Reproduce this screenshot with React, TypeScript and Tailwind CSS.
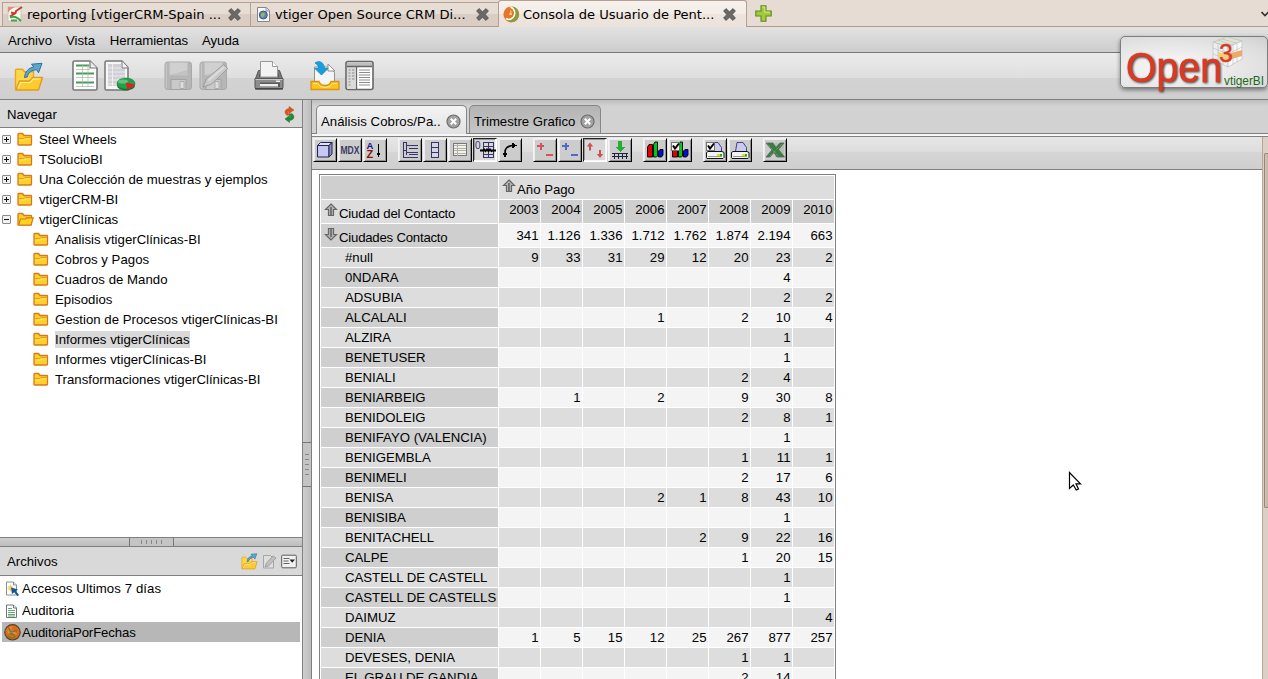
import type { ReactNode } from "react";

type IconProps = { className?: string };

/* ---------- browser tab icons ---------- */

const CloseX = ({ className = "" }: IconProps) => (
  <svg className={`shrink-0 ${className}`} width="13" height="13" viewBox="0 0 13 13">
    <path d="M3 .6 6.5 3.8 10 .6 12.4 3 9.2 6.5 12.4 10 10 12.4 6.5 9.3 3 12.4 .6 10 3.8 6.5 .6 3Z" fill="#6b6967" stroke="#4f4d4b" strokeWidth=".8" />
  </svg>
);

const ReportingFavicon = () => (
  <svg className="shrink-0" width="17" height="17" viewBox="0 0 17 17">
    <path d="M1 1h13v14H1z" fill="#fbf7f2" stroke="#cfc3b8" />
    <path d="M1 1h7L3 4 1 7z" fill="#e58a76" />
    <path d="M3 10.500 8.500 7 9 5 15 1M4 6.500l4 1" fill="none" stroke="#cc3a25" strokeWidth="2" />
    <path d="M3 11.500c4-2 7-1 11 3.500M4 14.500h6" fill="none" stroke="#3aa648" strokeWidth="2" />
  </svg>
);

const PageFavicon = () => (
  <svg className="shrink-0" width="15" height="17" viewBox="0 0 15 17">
    <path d="M1.5 1.5h9l3 3v11h-12z" fill="#f7f7f7" stroke="#85868a" />
    <path d="M10 1.5v3.5h3.5" fill="#ddd" stroke="#99999d" />
    <circle cx="7.3" cy="9" r="4" fill="#5f83b5" stroke="#3c5a86" />
    <path d="M5 7.5l3-1 1 2-2 3-2-1z" fill="#9fb35c" />
  </svg>
);

const PentahoFavicon = () => (
  <svg className="shrink-0" width="17" height="17" viewBox="0 0 17 17">
    <circle cx="8.300" cy="8.300" r="7.900" fill="#e4772b" />
    <path d="M9 .4a8 8 0 0 1 0 15.900c-1 .2-3-.3-4.500-1.500C8.500 14 11 11.500 11 8S10.500 2.500 9 .4Z" fill="#8b9c3a" />
    <path d="M7.500 1c4.500 1.500 5.500 7.500 2.500 10.500-2 2-5 2.300-7 1" fill="none" stroke="#fff" strokeWidth="1.500" />
    <path d="M8 3.500 6 9h3z" fill="#f8c890" />
  </svg>
);

const PlusIcon = () => (
  <svg className="shrink-0" width="17" height="17" viewBox="0 0 17 17">
    <path d="M6 .8h5V6h5.200v5H11v5.200H6V11H.8V6H6z" fill="#a4c93c" stroke="#5f8a1c" strokeWidth="1.100" />
    <path d="M7.200 2h2.600v5.200H15" fill="none" stroke="#d3e88c" />
  </svg>
);

/* ---------- main toolbar icons ---------- */

const OpenFolder = ({ className = "", size = 30 }: IconProps & { size?: number }) => (
  <svg className={`shrink-0 ${className}`} width={size} height={size} viewBox="0 0 30 30">
    <path d="M1.500 27.500V8.500q0-1.200 1.200-1.200H8.500l2 2.500h9v6H27" fill="#ffd84a" stroke="#e8a526" strokeWidth="1.400" />
    <path d="M1.800 28 5.500 19h10l3-3.500h10L24.500 28z" fill="#fdcb2c" stroke="#e59a1d" strokeWidth="1.400" strokeLinejoin="round" />
    <path d="M4 26.300 6.800 20.500h9.400l3-3.500h7.300" fill="none" stroke="#fff0a0" strokeWidth="1.200" />
    <path d="M10.500 15.500C11 9.500 14.500 6 19.800 5L17.500 2.200 28 1.300l-3.500 9.500-1.700-3C17.500 8 14 10.500 13.300 15z" fill="#5ba6d2" stroke="#2f6f9c" strokeWidth="1" />
  </svg>
);

const ReportIcon = () => (
  <svg className="shrink-0" width="26" height="31" viewBox="0 0 26 31">
    <path d="M1 2.500Q1 1 2.500 1H18l7 7v20.500q0 1.500-1.500 1.500h-21Q1 30 1 28.500z" fill="#fcfcfc" stroke="#777" strokeWidth="1.600" />
    <path d="M4 5.500h13M4 13.500h18M4 22.500h18" stroke="#4a9a5b" strokeWidth="2.200" />
    <path d="M4 9.500h14M4 17.500h18M4 26.500h18M10.500 4v23M16 4v23" stroke="#a8b8aa" strokeWidth=".7" />
    <path d="M18 1v7h7" fill="#ececec" stroke="#777" strokeWidth="1.200" />
  </svg>
);

const AnalysisIcon = () => (
  <svg className="shrink-0" width="32" height="32" viewBox="0 0 32 32">
    <path d="M1 2.500Q1 1 2.500 1H18l6 6.500V30H2.500Q1 30 1 28.500z" fill="#f6f6f6" stroke="#777" strokeWidth="1.500" />
    <path d="M4 4h13v4h4v18H4z" fill="#d0d0d6" />
    <path d="M8.500 4v24M4 8h17M4 12h18M4 16h18M4 20h15M4 24h10" stroke="#f4f4f4" strokeWidth=".8" />
    <path d="M18 1v7h6" fill="#f5f5f5" stroke="#777" />
    <ellipse cx="22" cy="25.500" rx="9" ry="5" fill="#12702f" />
    <ellipse cx="22" cy="23.500" rx="9" ry="5.500" fill="#23a04b" stroke="#15813a" strokeWidth=".6" />
    <ellipse cx="19" cy="21.500" rx="5" ry="2" fill="#62c37d" />
    <path d="M22 22.500l8.500 2c-1.500 3-4 4-7.500 4.500z" fill="#e41d22" />
  </svg>
);

const SaveIcon = ({ pencil = false }: { pencil?: boolean }) => (
  <svg className="shrink-0" width="30" height="30" viewBox="0 0 30 30">
    <rect x="1" y="1" width="26.500" height="27.500" rx="2.500" fill="#b6b6b6" stroke="#a9a9a9" />
    <path d="M5.500 1.500h18V14h-18z" fill="#d0d0d0" stroke="#c0c0c0" />
    <path d="M6 14l17-5v5z" fill="#c3c3c3" />
    <path d="M7 18.500h15v10H7z" fill="#c9c9c9" stroke="#a3a3a3" />
    <path d="M16 20.500h4v7h-4z" fill="#dedede" stroke="#adadad" />
    <path d="M2.300 2.300v25" stroke="#cacaca" />
    {pencil && (
      <g>
        <path d="M4 26 7.500 18 24.500 3.500 28.800 7.500 12.500 23z" fill="#c9c9c9" stroke="#9e9e9e" />
        <path d="M9.500 19.500 25 6" stroke="#dddddd" strokeWidth="2" />
      </g>
    )}
  </svg>
);

const PrinterIcon = () => (
  <svg className="shrink-0" width="30" height="31" viewBox="0 0 30 31">
    <path d="M4.500 10.500h21L29 20H1z" fill="#7a7a7a" stroke="#555" />
    <path d="M6.500 10h17l1.500 7H5z" fill="#4a4a4a" />
    <path d="M6.500 17V1.500h12l5 5V17z" fill="#f3f3f3" stroke="#999" />
    <path d="M18.500 1.500v5h5" fill="#fff" stroke="#999" />
    <path d="M1 18.500h28V27q0 2-2 2H3q-2 0-2-2z" fill="#8c8c8c" stroke="#555" />
    <path d="M1.500 19.500h27" stroke="#c8c8c8" />
    <path d="M6 22.500h20v4.500H6z" fill="#5a5a5a" />
    <path d="M6 24h18v2.500H6z" fill="#ededed" />
    <path d="M22 20.500h4v1.500h-4z" fill="#ededed" />
    <path d="M1 28h28v1.500H1z" fill="#454545" />
  </svg>
);

const InboxIcon = () => (
  <svg className="shrink-0" width="30" height="31" viewBox="0 0 30 31">
    <path d="M4.500 26V7h14l6 5.500V26z" fill="#f3f5f6" stroke="#909090" />
    <path d="M18 4l7 7h-7z" fill="#fff" stroke="#909090" />
    <path d="M1 21.500h8q1.500 4 6 4t6-4h8v8H1z" fill="#fdc41b" stroke="#dc931a" strokeWidth="1.300" />
    <path d="M3 23.500h4.500q2 4 7.500 4t7.500-4H27" fill="none" stroke="#ffe98a" />
    <path d="M5 3c4-3 9-1 9.500 5.500H18L11.500 15 5 8.500h3.500C8.500 6 7.500 4 5 3Z" fill="#169fe0" stroke="#1480bd" strokeWidth=".8" />
  </svg>
);

const PanelIcon = () => (
  <svg className="shrink-0" width="29" height="31" viewBox="0 0 29 31">
    <rect x="1" y="1.500" width="27" height="28" rx="2" fill="#fff" stroke="#666" strokeWidth="1.600" />
    <path d="M2 2.500h25V6H2z" fill="#bdbdbd" />
    <path d="M2 6h8.500v22.500H2z" fill="#dadada" />
    <path d="M2 6.500h25M11.500 6v23" stroke="#666" strokeWidth="1.300" />
    <path d="M3.500 10h2M3.500 13h2M3.500 16h2M3.500 19h2M3.500 22h2M3.500 25h2M7 10h2.500M7 13h2.500M7 16h2.500M7 19h2.500M14 10h11M14 12.500h11M14 15h11M14 17.500h11M14 20h11M14 22.500h11M14 25h11" stroke="#8b8b8b" />
  </svg>
);

/* ---------- side panel icons ---------- */

const RefreshIcon = () => (
  <svg className="shrink-0" width="11" height="17" viewBox="0 0 11 17">
    <path d="M5 .5 10 4 5 7.500V5.500C3.800 5.500 3.800 7 5.500 8.500L3.500 9.500C0 8 0 3 5 2.500z" fill="#d9571f" stroke="#c24a1c" strokeWidth=".5" />
    <path d="M5.500 16.500 1 13l4.500-3.500V11.500c1.500 0 1.500-1.500-.5-3L7.500 7.500c3.500 1.500 3.500 6.500-2 7z" fill="#238a35" stroke="#176a27" strokeWidth=".5" />
  </svg>
);

const Expander = ({ open = false }: { open?: boolean }) => (
  <svg className="shrink-0" width="9" height="9" viewBox="0 0 9 9">
    <rect x=".5" y=".5" width="8" height="8" rx=".5" fill="#f1f1f1" stroke="#8a8a8a" />
    <path d={open ? "M2 4.500h5" : "M2 4.500h5M4.500 2v5"} stroke="#111" />
  </svg>
);

const Folder = ({ open = false }: { open?: boolean }) => (
  <svg className="shrink-0" width="17" height="14" viewBox="0 0 17 14">
    <path d="M1 12.300V2.200Q1 1.500 1.700 1.500H5.500l1.500 2h6.800q.7 0 .7.700v8.100q0 .7-.7.700H1.700q-.7 0-.7-.7z" fill="#ffd02a" stroke="#d9781a" strokeWidth="1.300" />
    {open ? (
      <path d="M1.500 13 3.500 7h5l1-1.200h6.800L14 13z" fill="#ffd21f" stroke="#d97a14" strokeWidth="1.200" />
    ) : (
      <path d="M1.800 6.500h5l1-1h6" fill="none" stroke="#e59a2b" />
    )}
    {!open && <path d="M2.500 8h5l1-1h5" fill="none" stroke="#ffe75c" />}
  </svg>
);

const ActionFile = () => (
  <svg className="shrink-0" width="15" height="16" viewBox="0 0 15 16">
    <path d="M1.500 1h7l3 3v10h-10z" fill="#fff" stroke="#8a8f94" />
    <path d="M8.500 1v3h3" fill="#eee" stroke="#8a8f94" />
    <path d="M5.500 3.500v7M2.500 7h6M3.500 5l4 4M7.500 5l-4 4" stroke="#f5cd60" strokeWidth="1.100" />
    <path d="M6 6.500l7 2-2.300 1.500 3.300 4-1.500 1.300-3.300-4L7 13z" fill="#11568f" />
  </svg>
);

const ReportFile = () => (
  <svg className="shrink-0" width="13" height="15" viewBox="0 0 13 15">
    <path d="M1.500 1h7l3 3v9.500h-10z" fill="#fff" stroke="#70757a" />
    <path d="M3 4.500h4M3 6.500h7M3 8.500h7M3 10.500h7M3 12h7" stroke="#65a56e" />
    <path d="M8.500 1v3h3" fill="#eee" stroke="#70757a" />
  </svg>
);

const GlobeFile = () => (
  <svg className="shrink-0" width="17" height="17" viewBox="0 0 17 17">
    <circle cx="8.500" cy="8.300" r="7.700" fill="#d96a24" stroke="#55491f" strokeWidth="1.200" />
    <path d="M3 5c2-3 5-3 6-2L6 6l4 1 3 3-3 1-3-2-3 1z" fill="#e9863c" />
    <path d="M4 3c2 2 1 4 3 5 3 0 4-2 6-1M5 10c3-1 5 0 6 3M3 12c3 2 6 3 8 1" fill="none" stroke="#6d7a2b" strokeWidth="1.300" />
  </svg>
);

const EditDisabled = () => (
  <svg className="shrink-0" width="15" height="16" viewBox="0 0 15 16">
    <path d="M1.500 1.500h7l3 3v9.500h-10z" fill="#dedede" stroke="#a6a6a6" />
    <path d="M3 13l1.500-4L11 2l3 2-7.500 8z" fill="#bfbfbf" stroke="#a2a2a2" />
  </svg>
);

const OptionsIcon = () => (
  <svg className="shrink-0" width="16" height="15" viewBox="0 0 16 15">
    <rect x=".7" y="1.200" width="14.600" height="12.600" rx="1" fill="#f1f1f1" stroke="#5c5c5c" />
    <path d="M2.500 4.500h6M2.500 7h5M2.500 9.500h6" stroke="#666" />
    <path d="M8.500 5.500h5.500L11.200 8.700z" fill="#222" />
  </svg>
);

const TabClose = () => (
  <svg className="-mt-[2px] shrink-0" width="15" height="15" viewBox="0 0 15 15">
    <circle cx="7.500" cy="7.500" r="6.500" fill="#a3a3a3" stroke="#6c6c6c" strokeWidth="1.200" />
    <path d="M4.800 4.800l5.400 5.400M10.200 4.800l-5.400 5.400" stroke="#fff" strokeWidth="2" />
  </svg>
);

/* ---------- pivot toolbar ---------- */

const Glyph = ({ children }: { children: ReactNode }) => (
  <svg className="shrink-0 overflow-visible" width="20" height="20" viewBox="0 0 20 20" shapeRendering="crispEdges" fill="none">
    {children}
  </svg>
);

const navy = "#34346c";

const bars = (
  <g shapeRendering="auto" stroke="#000" strokeWidth=".9">
    <path d="M2.500 7 4 4.500h3.500V17h-5z" fill="#e00000" />
    <path d="M8.500 4.500 10 2h2.500v14l-1 1h-3z" fill="#00c818" />
    <path d="M13.500 11 15 9.500h3V15l-1.500 2h-3z" fill="#0010d8" />
  </g>
);

const checkbox = (
  <g>
    <rect x="1.500" y="2.500" width="8" height="8" fill="#f4f4f4" stroke="#777" />
    <path d="M3 5.500 5 8.500 9 3.500" stroke="#000" strokeWidth="2" shapeRendering="auto" />
  </g>
);

const printer = (
  <g>
    <path d="M5.500 11.500 7 2.500h6l3.500 5v4z" fill="#c9caf2" stroke="#34346c" strokeWidth=".9" shapeRendering="auto" />
    <path d="M1.500 12.500 3 11.500h14l2 1v5l-1 1H2l-.5-1z" fill="#f2f2f2" stroke="#111" shapeRendering="auto" />
    <path d="M3 16.500h14" stroke="#999" />
    <path d="M12 14.500h3" stroke="#e8e000" strokeWidth="2" />
    <path d="M15 14.500h2" stroke="#20b020" strokeWidth="2" />
  </g>
);

type Tool = { id: string; pressed?: boolean; glyph: ReactNode };

const toolGroups: Tool[][] = [
  [
    {
      id: "cube",
      glyph: (
        <g stroke="#22224e" shapeRendering="auto">
          <path d="M2.500 5.500h11.500v11.500H2.500z" fill="#c7c7f2" />
          <path d="M2.500 5.500 5.500 2.500H17l-3 3z" fill="#e3e3fb" />
          <path d="M14 5.500l3-3V14l-3 3z" fill="#8f8fc4" />
        </g>
      ),
    },
    {
      id: "mdx",
      glyph: (
        <text x=".5" y="14" textLength="19" lengthAdjust="spacingAndGlyphs" fontFamily="Liberation Sans" fontWeight="700" fontSize="11.500" fill="#3c3a60">
          MDX
        </text>
      ),
    },
    {
      id: "sort",
      glyph: (
        <g>
          <text x="1.500" y="9" fontFamily="Liberation Sans" fontWeight="700" fontSize="9.500" fill="#12128e">A</text>
          <text x="1.500" y="17.500" fontFamily="Liberation Sans" fontWeight="700" fontSize="11" fill="#8e1212">Z</text>
          <path d="M13.500 4v10" stroke="#000" />
          <path d="M11 12.500h5L13.500 17z" fill="#000" />
        </g>
      ),
    },
  ],
  [
    { id: "levels", glyph: <path d="M3.500 2v16M3 2.500h4M3 17.500h15M6.500 2v8M6.500 5.500H18M9 8.500h9M3 10.500h4M6.500 10v5M6.500 12.500H18M9 14.500h9" stroke={navy} /> },
    { id: "members", glyph: <path d="M6.500 2.500h7v15h-7zM6 7.500h8M6 12.500h8" stroke={navy} fill="#d6d6e2" /> },
    {
      id: "properties",
      glyph: (
        <g>
          <path d="M3.500 3.500h13v12h-13z" fill="#f2f2ea" stroke="#777" />
          <path d="M4 5.500h12M4 8.500h12M4 10.500h12M4 13.500h12M7.500 4v12" stroke="#b0b0a8" />
        </g>
      ),
    },
    {
      id: "suppress",
      pressed: true,
      glyph: (
        <g>
          <text x="0" y="8.500" fontFamily="Liberation Sans" fontSize="10" fill={navy}>0</text>
          <path d="M8.500 2.500h10v15h-10zM13.500 2v16M8 6.500h11M8 14.500h11" stroke={navy} />
          <path d="M5 10.500h3l1-1 1.500 1.500 1.500-1.500 1.500 1.500 1.500-1.500 1.500 1.500 1-.5h3.500" stroke="#000" strokeWidth="2" shapeRendering="auto" />
        </g>
      ),
    },
    {
      id: "swap",
      glyph: (
        <g>
          <path d="M5 13C5 8 7 6.500 12 5.500" stroke="#000" strokeWidth="1.700" shapeRendering="auto" />
          <path d="M12 2.500v6L17 5.500zM2 12.500h6L5 17.500z" fill="#000" />
        </g>
      ),
    },
  ],
  [
    { id: "drill-member", glyph: <path d="M2 6h7M5.500 2.500v7M11 15h7" stroke="#d8505a" strokeWidth="2" /> },
    { id: "drill-position", glyph: <path d="M2 6h7M5.500 2.500v7M11 15h7" stroke="#5068d2" strokeWidth="2" /> },
    {
      id: "drill-replace",
      pressed: true,
      glyph: (
        <g fill="#d05050" shapeRendering="auto">
          <path d="M5 2.500 8.200 6.500H6v4H4v-4H1.800z" />
          <path d="M15 18 11.800 14H14v-4h2v4h2.200z" />
        </g>
      ),
    },
    {
      id: "drill-through",
      glyph: (
        <g>
          <path d="M8 1h4v6h3l-5 5-5-5h3z" fill="#25ad35" />
          <path d="M2 13.500h16M2 16.500h16M4.500 13v6M8.500 13v6M12.500 13v6M16.500 13v6" stroke="#202040" />
        </g>
      ),
    },
  ],
  [
    { id: "chart", glyph: bars },
    { id: "chart-config", glyph: <g>{bars}{checkbox}</g> },
  ],
  [
    { id: "print-config", glyph: <g>{printer}{checkbox}</g> },
    { id: "print", glyph: printer },
  ],
  [
    {
      id: "excel",
      glyph: (
        <g shapeRendering="auto">
          <path d="M10 3h9v14h-9z" fill="#b4c0b4" />
          <path d="M1 3h7l3 4.500L15 3h4l-5.500 6.500 6 7.500h-7.500l-3-4.500L5 17H1l6-7z" fill="#3c7c42" stroke="#56665a" strokeWidth=".8" />
          <path d="M2 3.500 14 17M17 4 4 17" stroke="#7cae80" strokeDasharray="1 1" />
        </g>
      ),
    },
  ],
];

/* ---------- data ---------- */

const folders = [
  { name: "Steel Wheels" },
  { name: "TSolucioBI" },
  { name: "Una Colección de muestras y ejemplos" },
  { name: "vtigerCRM-BI" },
  {
    name: "vtigerClínicas",
    children: [
      "Analisis vtigerClínicas-BI",
      "Cobros y Pagos",
      "Cuadros de Mando",
      "Episodios",
      "Gestion de Procesos vtigerClínicas-BI",
      "Informes vtigerClínicas",
      "Informes vtigerClínicas-BI",
      "Transformaciones vtigerClínicas-BI",
    ],
  },
];

const years = ["2003", "2004", "2005", "2006", "2007", "2008", "2009", "2010"];

const totals = ["341", "1.126", "1.336", "1.712", "1.762", "1.874", "2.194", "663"];

const cities: [string, string[]][] = [
  ["#null", ["9", "33", "31", "29", "12", "20", "23", "2"]],
  ["0NDARA", ["", "", "", "", "", "", "4", ""]],
  ["ADSUBIA", ["", "", "", "", "", "", "2", "2"]],
  ["ALCALALI", ["", "", "", "1", "", "2", "10", "4"]],
  ["ALZIRA", ["", "", "", "", "", "", "1", ""]],
  ["BENETUSER", ["", "", "", "", "", "", "1", ""]],
  ["BENIALI", ["", "", "", "", "", "2", "4", ""]],
  ["BENIARBEIG", ["", "1", "", "2", "", "9", "30", "8"]],
  ["BENIDOLEIG", ["", "", "", "", "", "2", "8", "1"]],
  ["BENIFAYO (VALENCIA)", ["", "", "", "", "", "", "1", ""]],
  ["BENIGEMBLA", ["", "", "", "", "", "1", "11", "1"]],
  ["BENIMELI", ["", "", "", "", "", "2", "17", "6"]],
  ["BENISA", ["", "", "", "2", "1", "8", "43", "10"]],
  ["BENISIBA", ["", "", "", "", "", "", "1", ""]],
  ["BENITACHELL", ["", "", "", "", "2", "9", "22", "16"]],
  ["CALPE", ["", "", "", "", "", "1", "20", "15"]],
  ["CASTELL DE CASTELL", ["", "", "", "", "", "", "1", ""]],
  ["CASTELL DE CASTELLS", ["", "", "", "", "", "", "1", ""]],
  ["DAIMUZ", ["", "", "", "", "", "", "", "4"]],
  ["DENIA", ["1", "5", "15", "12", "25", "267", "877", "257"]],
  ["DEVESES, DENIA", ["", "", "", "", "", "1", "1", ""]],
  ["EL GRAU DE GANDIA", ["", "", "", "", "", "2", "14", ""]],
];

/* ---------- pieces ---------- */

const DrillArrow = ({ down = false }: { down?: boolean }) => (
  <svg className={down ? "shrink-0 rotate-180" : "shrink-0"} width="14" height="14" viewBox="0 0 14 14">
    <path d="M7 1 12.500 6.500H9.500V12.500H4.500V6.500H1.500z" fill="#b5b5b5" stroke="#666" strokeWidth="1.200" />
    <path d="M7 4v8" stroke="#5b5b5b" strokeWidth="1.400" />
  </svg>
);

const BrowserTab = ({ icon, title, active = false, className = "" }: { icon: ReactNode; title: string; active?: boolean; className?: string }) => (
  <div
    className={`flex shrink-0 items-center border-l border-t border-[#b49f90] ${
      active
        ? "h-[27px] rounded-t-[3px] border-r bg-[linear-gradient(#f7f2ee,#f3ece7_50%,#ece4dd_50%,#ebe3dc)]"
        : "h-[24px] bg-[linear-gradient(#e6ddd5_50%,#dacdc3_50%)]"
    } ${className}`}
  >
    {icon}
    <span className="flex-1 whitespace-nowrap">{title}</span>
    <CloseX />
  </div>
);

const PanelHeader = ({ title, children, className }: { title: string; children: ReactNode; className: string }) => (
  <div className={`flex shrink-0 items-center border-b border-[#808080] bg-[#d9d9d9] pl-[7px] ${className}`}>
    <span className="flex-1">{title}</span>
    {children}
  </div>
);

const TreeRow = ({ name, open, child, selected }: { name: string; open?: boolean; child?: boolean; selected?: boolean }) => (
  <div className={`flex h-5 items-center ${child ? "pl-[33px] tracking-[0.02px]" : "pl-[2px]"}`}>
    {!child && <Expander open={open} />}
    <span className={child ? "w-[22px]" : "ml-[6px] w-[22px]"}>
      <Folder open={open} />
    </span>
    <span className={`whitespace-nowrap leading-[17px] ${selected ? "bg-[#d9d9d9]" : ""}`}>{name}</span>
  </div>
);

const ToolButton = ({ tool }: { tool: Tool }) => (
  <button
    className={`flex size-6 items-center justify-center border ${
      tool.pressed
        ? "border-t-[#222] border-l-[#222] border-r-white border-b-white bg-[#d9d9d9] shadow-[inset_-1px_-1px_0_#f6f6f6,inset_1px_1px_0_#9a9a9a]"
        : "border-t-[#f4f4f4] border-l-[#f4f4f4] border-r-black border-b-black bg-[#cccccc] shadow-[inset_1px_1px_0_#ececec,inset_-1px_-1px_0_#909090]"
    }`}
  >
    <Glyph>{tool.glyph}</Glyph>
  </button>
);

const Row = ({ label, cells, dark, tall, header }: { label: ReactNode; cells: string[]; dark: boolean; tall?: boolean; header?: boolean }) => (
  <div className={`flex ${tall ? "h-[24px]" : "h-[20px]"}`}>
    <div className={`flex w-[178px] shrink-0 items-center overflow-hidden whitespace-nowrap border-r border-b border-white ${dark ? "bg-[#cfcfcf]" : "bg-[#dddddd]"} ${tall ? "" : "pl-6"}`}>
      {label}
    </div>
    {cells.map((value, i) => (
      <div
        key={i}
        className={`flex w-[42px] shrink-0 items-center justify-end border-r border-b border-white pr-[1.5px] ${
          header ? "bg-[#cfcfcf] pb-[3px]" : dark ? "bg-[#f4f4f4]" : "bg-[#dddddd]"
        }`}
      >
        {value}
      </div>
    ))}
  </div>
);

const Label = ({ text, down, className = "" }: { text: string; down?: boolean; className?: string }) => (
  <div className={`flex items-start pl-[3px] pt-[2px] ${className}`}>
    <DrillArrow down={down} />
    <span className="ml-[1px] mt-[3px] leading-4">{text}</span>
  </div>
);

export default function App() {
  return (
    <div className="relative flex h-[679px] w-[1268px] flex-col overflow-hidden bg-white font-['Liberation_Sans',sans-serif] text-[13.2px] text-black">
      {/* Browser tabs */}
      <div className="flex h-[27px] shrink-0 items-end bg-[#e6dcd3] pl-[2px] font-['DejaVu_Sans',sans-serif] text-[13.1px] shadow-[inset_0_-1px_0_#b49b88]">
        <BrowserTab className="mb-px w-[248px] gap-[3px] pl-[4px] pr-[9px] tracking-[-0.04px]" icon={<ReportingFavicon />} title="reporting [vtigerCRM-Spain ..." />
        <BrowserTab className="mb-px w-[248px] gap-[4px] pl-[5px] pr-[9px]" icon={<PageFavicon />} title="vtiger Open Source CRM Di..." />
        <BrowserTab active className="w-[249px] gap-[3px] pl-[4px] pr-[10px] pt-px tracking-[-0.04px]" icon={<PentahoFavicon />} title="Consola de Usuario de Pent..." />
        <div className="flex h-full flex-1 items-center justify-between pl-[8px]">
          <PlusIcon />
          <svg width="7" height="6" viewBox="0 0 7 6">
            <path d="M.5 1 4 4.500 7.500 1" fill="none" stroke="#333" strokeWidth="1.600" />
          </svg>
        </div>
      </div>

      {/* Menu */}
      <nav className="flex h-[26px] shrink-0 items-center gap-[14px] border-b border-[#777] bg-linear-to-b from-[#e2e2e2] to-[#cdcdcd] pl-2 pt-[2px]">
        <span>Archivo</span>
        <span>Vista</span>
        <span className="pl-[0.7px] tracking-[-0.08px]">Herramientas</span>
        <span>Ayuda</span>
      </nav>

      {/* Main toolbar */}
      <div className="flex h-[47px] shrink-0 items-center border-b border-[#808080] bg-[linear-gradient(#ebebeb,#dedede_54%,#d3d3d3_54%,#cfcfcf)] pb-px pl-[14px]">
        <OpenFolder className="mt-[2px]" />
        <div className="ml-[28px] flex items-center gap-[6px]">
          <ReportIcon />
          <AnalysisIcon />
        </div>
        <div className="ml-[28px] mt-px flex items-center gap-[5px]">
          <SaveIcon />
          <SaveIcon pencil />
        </div>
        <div className="ml-[25px] flex items-center">
          <PrinterIcon />
        </div>
        <div className="ml-[26px] flex items-center gap-[5px]">
          <InboxIcon />
          <PanelIcon />
        </div>
      </div>

      <div className="flex min-h-0 flex-1">
        {/* Sidebar */}
        <aside className="flex w-[302px] shrink-0 flex-col">
          <PanelHeader title="Navegar" className="h-[28px] pt-[2px]">
            <span className="pr-[7px]">
              <RefreshIcon />
            </span>
          </PanelHeader>
          <div className="flex-1 pt-[1px]">
            {folders.map((f) => (
              <div key={f.name}>
                <TreeRow name={f.name} open={!!f.children} />
                {f.children?.map((c) => <TreeRow key={c} name={c} child selected={c === "Informes vtigerClínicas"} />)}
              </div>
            ))}
          </div>
          <div className="flex h-[10px] shrink-0 justify-start border-y border-[#808080] bg-linear-to-b from-[#cfcfcf] to-[#bdbdbd] pl-[129px]">
            <div className="flex h-2 w-[45px] items-center justify-center gap-[4px] border-x border-[#777] bg-[#c4c4c4]">
              {[0, 1, 2, 3, 4].map((n) => (
                <i key={n} className="h-1 w-px bg-[#888]" />
              ))}
            </div>
          </div>
          <PanelHeader title="Archivos" className="h-[29px] pt-px">
            <div className="flex items-center gap-[4px] pr-[5px]">
              <OpenFolder size={17} />
              <EditDisabled />
              <OptionsIcon />
            </div>
          </PanelHeader>
          <div className="flex h-[103px] shrink-0 flex-col px-[2px] pt-[2px]">
            <div className="flex h-[22px] items-center gap-[2px] pl-[3px] tracking-[0.1px]">
              <ActionFile />
              <span>Accesos Ultimos 7 días</span>
            </div>
            <div className="flex h-[22px] items-center gap-[4px] pl-[3px]">
              <ReportFile />
              <span>Auditoria</span>
            </div>
            <div className="flex h-[20px] items-center bg-[#b7b7b7] pl-[2px] tracking-[-0.12px]">
              <GlobeFile />
              <span className="ml-[1px] pt-px">AuditoriaPorFechas</span>
            </div>
          </div>
        </aside>

        {/* Vertical splitter */}
        <div className="w-[10px] shrink-0 border-x border-[#808080] bg-linear-to-r from-[#cfcfcf] to-[#bdbdbd] pt-[342px]">
          <div className="flex h-[45px] flex-col items-center justify-center gap-[4px] border-y border-[#777] bg-[#c4c4c4]">
            {[0, 1, 2, 3, 4].map((n) => (
              <i key={n} className="h-px w-1 bg-[#888]" />
            ))}
          </div>
        </div>

        {/* Workspace */}
        <main className="flex min-w-0 flex-1 flex-col">
          <div className="flex h-[34px] shrink-0 items-end gap-[2px] border-b border-[#808080] bg-linear-to-b from-[#bdbdbd] to-[#d2d2d2] to-[6px] pl-[4px]">
            <div className="mb-[-1px] flex h-[29px] w-[151px] items-center rounded-t-[5px] border border-b-0 border-[#868686] bg-linear-to-b from-[#f4f4f4] to-[#e2e2e2] pl-[4px] pr-[5px] pt-[4px]">
              <span className="flex-1 tracking-[0.05px]">Análisis Cobros/Pa..</span>
              <TabClose />
            </div>
            <div className="flex h-[28px] w-[132px] items-center rounded-t-[5px] border border-b-0 border-[#868686] bg-linear-to-b from-[#b4b4b4] to-[#c6c6c6] pl-[4px] pr-[5px] pt-[5px]">
              <span className="flex-1">Trimestre Grafico</span>
              <TabClose />
            </div>
          </div>
          <div className="h-[3px] shrink-0 border-b border-[#808080] bg-[#f6f6f6]" />

          <div className="flex min-h-0 flex-1">
            <div className="flex min-w-0 flex-1 flex-col bg-white">
              <div className="flex h-[33px] shrink-0 gap-[11px] border-b border-[#808080] bg-[linear-gradient(#e6e6e6,#dcdcdc_48%,#d5d5d5_48%,#cfcfcf)] pl-px pt-px">
                {toolGroups.map((group) => (
                  <div key={group[0].id} className="flex gap-px">
                    {group.map((t) => (
                      <ToolButton key={t.id} tool={t} />
                    ))}
                  </div>
                ))}
              </div>

              <div className="min-h-0 flex-1 overflow-hidden pl-[7px] pt-[4px]">
                <div className="w-[517px] border border-[#808080] pl-px pt-px">
                  <div className="flex h-[24px]">
                    <div className="w-[178px] border-r border-b border-white bg-[#cfcfcf]" />
                    <div className="flex w-[336px] items-center border-r border-b border-white bg-[#dddddd]">
                      <Label text="Año Pago" />
                    </div>
                  </div>
                  <Row label={<Label text="Ciudad del Contacto" className="tracking-[-0.17px]" />} cells={years} dark={false} tall header />
                  <Row label={<Label text="Ciudades Contacto" down className="tracking-[-0.22px]" />} cells={totals} dark tall />
                  {cities.map(([city, values], i) => (
                    <Row key={city} label={city} cells={values} dark={i % 2 === 1} />
                  ))}
                </div>
              </div>
            </div>

            {/* Scrollbar */}
            <div className="w-[6px] shrink-0 border-l border-[#b8a698] bg-[#dcd0c6] pl-px pt-[16px]">
              <div className="h-[355px] rounded-l-[2px] border border-r-0 border-[#97877b] bg-linear-to-r from-[#d2c3b8] to-[#c3b2a6]" />
            </div>
          </div>
        </main>
      </div>

      {/* Product badge */}
      <div className="absolute left-[1120px] top-[36px] h-[52px] w-[148px] rounded-[5px] border border-[#7d7d7d] bg-[radial-gradient(ellipse_at_35%_60%,#fafafa,#dedede_75%,#cfcfcf)] shadow-[0_2px_4px_rgba(0,0,0,0.45)]">
        <svg width="147" height="58" viewBox="0 0 147 58" className="overflow-visible">
          <g strokeWidth=".6" stroke="#b4bac0">
            <path d="M92 5 106 0l15 4-14 6z" fill="#e2e4d2" />
            <path d="M92 5v18l15 7V10z" fill="#eceef2" />
            <path d="M107 10l14-6v18l-14 8z" fill="#f8f8f8" />
            <path d="M92 11l15 6 14-7M92 17l15 6 14-7M97 7v18M102 8v19M112 8v19M116 6v19M97 3l14 5M101 2l14 4" fill="none" />
            <path d="M107 17l14-4v6l-14 4z" fill="#efa865" stroke="none" />
            <path d="M97 15l10 3v5l-10-4z" fill="#f4cf6c" stroke="none" />
          </g>
          <g fontFamily="Liberation Sans">
            <text
              x="5"
              y="45"
              fontSize="42"
              textLength="96"
              lengthAdjust="spacingAndGlyphs"
              fill="#d93a24"
              stroke="#d93a24"
              strokeWidth=".7"
              className="drop-shadow-[1.5px_1.5px_1px_rgba(40,40,40,0.85)]"
            >
              Open
            </text>
            <text x="98" y="25" fontSize="25" fill="#d93a24" stroke="#d93a24" strokeWidth=".4">3</text>
            <text x="103" y="48" fontSize="12" textLength="40" lengthAdjust="spacingAndGlyphs" fill="#1a6a1a">vtigerBI</text>
          </g>
        </svg>
      </div>

      {/* Pointer */}
      <svg className="absolute left-[1068px] top-[471px]" width="15" height="21" viewBox="0 0 15 21">
        <path d="M1.500 1.500V17.500L5.300 14 8.300 19 10.500 18 8 12.800h4.500z" fill="#fff" stroke="#000" strokeWidth="1.200" />
      </svg>
    </div>
  );
}
